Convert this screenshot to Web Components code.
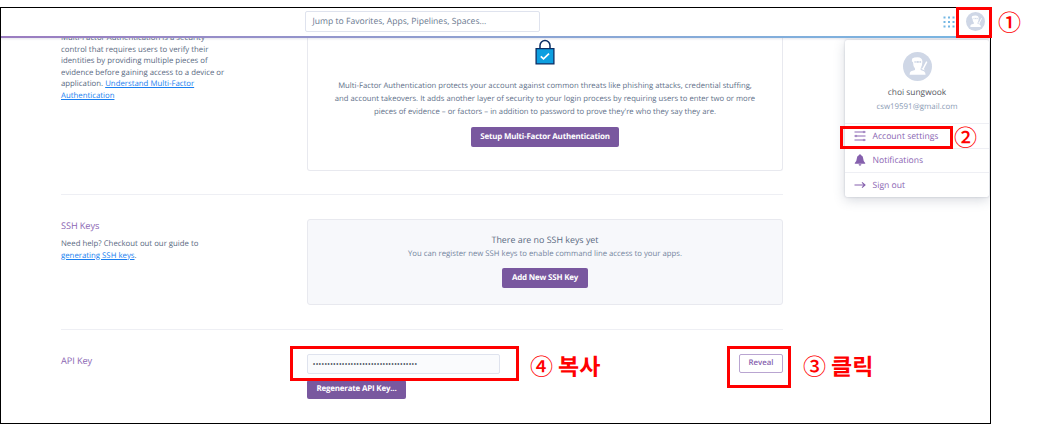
<!DOCTYPE html>
<html lang="en">
<head>
<meta charset="utf-8">
<title>Account settings</title>
<style>
  body {
    margin: 0;
    position: relative;
    width: 1038px;
    height: 424px;
    overflow: hidden;
    background: #fff;
    font-family: "Open Sans", "Noto Sans", sans-serif;
    text-rendering: geometricPrecision;
  }
</style>
</head>
<body>
<account-page></account-page>

<mark-box style="left:956px;top:7px;width:36px;height:31px"></mark-box>
<mark-box style="left:840px;top:126px;width:113px;height:23px"></mark-box>
<mark-box style="left:727px;top:346px;width:64px;height:42px"></mark-box>
<mark-box style="left:290px;top:346px;width:229px;height:35px"></mark-box>
<mark-label num="①" style="left:998px;top:7px"></mark-label>
<mark-label num="②" style="left:954px;top:122px"></mark-label>
<mark-label num="③" style="left:803px;top:351px">클릭</mark-label>
<mark-label num="④" style="left:530px;top:351px">복사</mark-label>

<script>
function define(name, html, setup) {
  const template = document.createElement("template");
  template.innerHTML = html;

  customElements.define(name, class extends HTMLElement {
    constructor() {
      super();
      this.attachShadow({ mode: "open" });
      this.shadowRoot.appendChild(template.content.cloneNode(true));
    }

    connectedCallback() {
      if (setup) setup(this, this.shadowRoot);
    }
  });
}

// red frames and numbers over the page
define("mark-box", `
<style>
  :host {
    position: absolute;
    box-sizing: border-box;
    border: 3px solid #f00;
  }
</style>
`);

define("mark-label", `
<style>
  :host {
    position: absolute;
    display: flex;
    align-items: center;
    gap: 5px;
    height: 28px;
    color: #f00;
    font: 700 23px/28px "Noto Sans CJK KR", sans-serif;
    white-space: nowrap;
  }
  .num { font-weight: 500; }
</style>
<span class="num"></span><slot></slot>
`, (el, root) => {
  root.querySelector(".num").textContent = el.getAttribute("num");
});

define("user-avatar", `
<style>
  :host { display: block; width: 29px; height: 29px; }
  svg { display: block; width: 100%; height: 100%; }
</style>
<svg viewBox="0 0 29 29">
  <circle cx="14.5" cy="14.5" r="14.5" fill="#cfd7e6"/>
  <path fill="#fff" d="M9.200 6.600Q11 5.200 14.500 5.200Q19.400 5.400 19.400 9.500Q19.400 14 17.600 16.400V18L21 19.200Q22.600 20.200 22.600 22.800H6.600Q6.600 20 8 19.200L12 18V16.400Q10 14.300 10 10.200L8.800 9.200Z"/>
  <path d="M11.500 9h6.600v1.900h-6.600z" fill="#cfd7e6"/>
  <path d="M12.300 10h1.700M15.500 10h1.700" stroke="#fff" stroke-width=".9"/>
  <path d="M19.800 17.300L23.800 9.600" stroke="#fff" stroke-width="1.500"/>
  <path d="M18.600 16.300l2.800 1.500" stroke="#fff" stroke-width="1"/>
</svg>
`);

define("hk-button", `
<style>
  :host {
    display: flex;
    align-items: center;
    justify-content: center;
    box-sizing: border-box;
    height: 19.500px;
    border-radius: 2px;
    background: #79589f;
    color: #fff;
    font-size: 7.950px;
    font-weight: 700;
    letter-spacing: -.19px;
    white-space: nowrap;
  }
  :host([outline]) {
    background: #fff;
    border: 1px solid #b9a5d1;
    color: #8560ad;
    letter-spacing: 0;
    font-weight: 600;
    font-size: 7.800px;
  }
</style>
<slot></slot>
`);

define("top-bar", `
<style>
  :host {
    position: relative;
    display: flex;
    align-items: center;
    box-sizing: border-box;
    height: 30px;
    padding: 0 5px 2px 304px;
    background: linear-gradient(90deg, #9b7cc0, #8fa3d2 50%, #78b6e2 100%) bottom / 100% 2px no-repeat, #fff;
    box-shadow: 0 1px 2px rgba(80, 80, 120, .15);
  }
  .search {
    box-sizing: border-box;
    width: 235px;
    height: 21px;
    margin-top: -1px;
    padding-left: 6.500px;
    border: 1px solid #dfe3ee;
    border-radius: 2px;
    color: #6b7a90;
    font-size: 8.600px;
    line-height: 19px;
    letter-spacing: 0;
    white-space: nowrap;
  }
  .grid {
    width: 12px;
    height: 12px;
    margin: -1px 11px 0 auto;
    fill: #74b7e4;
  }
  user-avatar { width: 19px; height: 19px; margin: -1px 0 0; }
</style>
<div class="search">Jump to Favorites, Apps, Pipelines, Spaces...</div>
<svg class="grid" viewBox="0 0 12 12">
  <path d="M.5 .5h2v2h-2zM5 .5h2v2h-2zM9.500 .5h2v2h-2zM.5 5h2v2h-2zM5 5h2v2h-2zM9.500 5h2v2h-2zM.5 9.500h2v2h-2zM5 9.500h2v2h-2zM9.500 9.500h2v2h-2z"/>
</svg>
<user-avatar></user-avatar>
`);

define("menu-item", `
<style>
  :host {
    display: flex;
    align-items: center;
    gap: 6.500px;
    box-sizing: border-box;
    height: 24.500px;
    padding-left: 9px;
    border-top: 1px solid #eeeff4;
    color: #8b66b3;
    font-size: 8.600px;
    white-space: nowrap;
  }
  ::slotted(svg) { width: 12px; height: 12px; }
</style>
<slot name="icon"></slot><slot></slot>
`);

define("user-menu", `
<style>
  :host {
    position: absolute;
    left: 844px;
    top: 31.500px;
    display: block;
    width: 144px;
    height: 157.500px;
    border-radius: 2px;
    background: #fff;
    box-shadow: 0 0 2px rgba(70, 80, 110, .3), 0 3px 12px rgba(70, 80, 110, .22);
  }
  .who {
    display: flex;
    flex-direction: column;
    align-items: center;
    height: 83.500px;
  }
  user-avatar { margin-top: 12.500px; }
  .name { margin-top: 4.500px; color: #555861; font-size: 8.400px; line-height: 14px; }
  .mail { color: #8c9cb5; font-size: 7.900px; line-height: 14px; }
</style>
<div class="who">
  <user-avatar></user-avatar>
  <div class="name">choi sungwook</div>
  <div class="mail">csw19591@gmail.com</div>
</div>
<menu-item>
  <svg slot="icon" viewBox="0 0 12 12" fill="#fff" stroke="#8b66b3">
    <path d="M.5 2h11M.5 6h11M.5 10h11"/>
    <circle cx="10" cy="2" r=".8" stroke-width=".8"/>
    <circle cx="2" cy="6" r=".8" stroke-width=".8"/>
    <circle cx="10" cy="10" r=".8" stroke-width=".8"/>
  </svg>Account settings
</menu-item>
<menu-item>
  <svg slot="icon" viewBox="0 0 12 12" fill="#8560ad">
    <path d="M6 .2a.9.900 0 0 1 .9.900Q9.300 1.900 9.300 5Q9.300 7.500 11.200 8.900V9.700H.8V8.900Q2.700 7.500 2.700 5Q2.700 1.900 5.100 1.100A.9.900 0 0 1 6 .2zM4.600 10.300h2.800a1.400 1.400 0 0 1-2.800 0z"/>
  </svg>Notifications
</menu-item>
<menu-item>
  <svg slot="icon" viewBox="0 0 12 12" fill="none" stroke="#8560ad" stroke-width="1.100">
    <path d="M.5 6h10.500M8 3.300L11 6L8 8.700"/>
  </svg>Sign out
</menu-item>
`);

// one settings row: title and help on the left, content on the right
define("settings-row", `
<style>
  :host {
    display: grid;
    grid-template-columns: 246px 476px;
    box-sizing: border-box;
    margin-left: 60px;
    width: 722px;
  }
  :host([ruled]) { border-top: 1px solid #eeeff4; }
  .title { color: #8b66b3; font-size: 9.200px; line-height: 14px; letter-spacing: -.1px; }
  .help { color: #596981; font-size: 7.800px; line-height: 11.550px; white-space: nowrap; }
</style>
<div>
  <div class="title"><slot name="title"></slot></div>
  <div class="help"><slot name="help"></slot></div>
</div>
<div><slot></slot></div>
`);

define("account-page", `
<style>
  :host {
    position: relative;
    isolation: isolate;
    display: block;
    box-sizing: border-box;
    width: 991px;
    height: 417px;
    margin-top: 7px;
    border: 1px solid #000;
    overflow: hidden;
  }
  top-bar { z-index: 2; }
  user-menu { z-index: 1; }
  a { color: #1a7ff0; text-decoration: underline; }
  .card {
    display: flex;
    flex-direction: column;
    align-items: center;
    box-sizing: border-box;
    width: 476px;
    border: 1px solid #e8e9ef;
    border-radius: 3px;
    text-align: center;
    white-space: nowrap;
  }
  .mfa-help { margin-top: 1px; }
  .mfa-row { height: 163px; margin-top: -6px; }
  .mfa { height: 139px; padding-top: 7px; border-top: 0; border-radius: 0 0 3px 3px; }
  .mfa svg { width: 20px; height: 26px; }
  .mfa p {
    margin: 14.500px 0 8px;
    color: #62718a;
    font-size: 7.700px;
    line-height: 13.250px;
    letter-spacing: .01px;
  }
  .mfa hk-button { width: 147.500px; }

  .ssh-row { height: 134.500px; padding-top: 24px; margin-top: -1px; }
  .ssh-help { margin-top: 6px; }
  .ssh { height: 86px; padding-top: 12px; background: #f7f8fb; }
  .ssh h3 { margin: 0; color: #596981; font-size: 8.900px; font-weight: 400; line-height: 15px; }
  .ssh p { margin: 0 0 6px; color: #7485a0; font-size: 7.750px; line-height: 15px; }
  .ssh hk-button { width: 86px; }

  .api-row { padding-top: 24px; }
  .line { display: flex; justify-content: space-between; height: 26px; }
  .key {
    box-sizing: border-box;
    width: 193px;
    height: 20.500px;
    padding: 0 5px;
    border: 1px solid #dfe3ee;
    border-radius: 2px;
    background: #fafbfd;
    color: #222c3c;
    font-size: 5.500px;
    font-weight: 700;
    line-height: 19px;
    letter-spacing: .84px;
    white-space: nowrap;
  }
  .regen { width: 99px; }
  .reveal { width: 44px; }
</style>

<top-bar></top-bar>
<user-menu></user-menu>

<settings-row class="mfa-row">
  <div slot="help" class="mfa-help">Multi-Factor Authentication is a security<br>control that requires users to verify their<br>identities by providing multiple pieces of<br>evidence before gaining access to a device or<br>application. <a>Understand Multi-Factor<br>Authentication</a></div>
  <div class="card mfa">
    <svg viewBox="0 0 20 26">
      <path d="M5 10V6.500a5 5 0 0 1 10 0V10" fill="none" stroke="#0b2d63" stroke-width="1.500"/>
      <path d="M1.100 9.600h17.800v15.300h-17.800z" fill="#0d9fe0" stroke="#0b2d63" stroke-width="1.300"/>
      <path d="M5.800 17.300l2.700 2.600l5.500-5.300" fill="none" stroke="#fff" stroke-width="1.700"/>
    </svg>
    <p>Multi-Factor Authentication protects your account against common threats like phishing attacks, credential stuffing,<br>and account takeovers. It adds another layer of security to your login process by requiring users to enter two or more<br>pieces of evidence – or factors – in addition to password to prove they're who they say they are.</p>
    <hk-button>Setup Multi-Factor Authentication</hk-button>
  </div>
</settings-row>

<settings-row class="ssh-row" ruled>
  <span slot="title">SSH Keys</span>
  <div slot="help" class="ssh-help">Need help? Checkout out our guide to<br><a>generating SSH keys</a>.</div>
  <div class="card ssh">
    <h3>There are no SSH keys yet</h3>
    <p>You can register new SSH keys to enable command line access to your apps.</p>
    <hk-button>Add New SSH Key</hk-button>
  </div>
</settings-row>

<settings-row class="api-row" ruled>
  <span slot="title">API Key</span>
  <div class="line">
    <div class="key">••••••••••••••••••••••••••••••••••••</div>
    <hk-button class="reveal" outline>Reveal</hk-button>
  </div>
  <hk-button class="regen">Regenerate API Key...</hk-button>
</settings-row>
`);
</script>
</body>
</html>
